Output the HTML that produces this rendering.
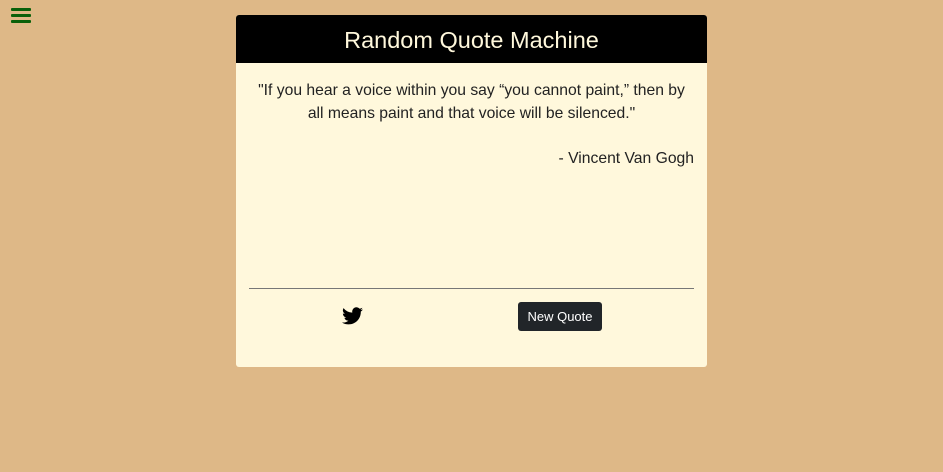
<!DOCTYPE html>
<html><head><style>
body{margin:0;width:943px;height:472px;background:#deb887;font-family:"Liberation Sans",sans-serif;position:relative;overflow:hidden}
.ham{position:absolute;left:11px;top:8px;width:20px}
.ham div{height:3px;background:#0a600a;margin-bottom:3px;border-radius:1px}
.card{position:absolute;left:236px;top:15px;width:471px;height:352px;background:#fff8dc;border-radius:3px;overflow:hidden}
.hd{height:48px;background:#000;color:#fff8dc;font-size:23.5px;text-align:center;line-height:50px}
.q{position:absolute;left:13px;width:445px;top:64px;text-align:center;font-size:15.7px;line-height:23px;color:#222}
.a{position:absolute;right:13px;top:135px;font-size:15.7px;color:#222}
.hr{position:absolute;left:13px;width:445px;top:273px;height:1px;background:#777}
.btn{position:absolute;left:282px;top:287px;width:84px;height:29px;background:#212529;color:#fff;border-radius:3px;font-size:13px;text-align:center;line-height:29px}
svg{position:absolute;left:106px;top:292px}
</style></head><body>
<div class="ham"><div></div><div></div><div></div></div>
<div class="card">
<div class="hd">Random Quote Machine</div>
<div class="q">"If you hear a voice within you say “you cannot paint,” then by all means paint and that voice will be silenced."</div>
<div class="a">- Vincent Van Gogh</div>
<div class="hr"></div>
<svg width="21" height="18" viewBox="0 0 24 20"><path fill="#000" d="M24 2.4a9.8 9.8 0 0 1-2.8.8A4.9 4.9 0 0 0 23.3.5a9.9 9.9 0 0 1-3.1 1.2A4.9 4.9 0 0 0 11.8 6.2 14 14 0 0 1 1.7 1a4.9 4.9 0 0 0 1.5 6.6A4.9 4.9 0 0 1 1 7v.1a4.9 4.9 0 0 0 3.9 4.8 4.9 4.9 0 0 1-2.2.1 4.9 4.9 0 0 0 4.6 3.4A9.9 9.9 0 0 1 0 17.4 14 14 0 0 0 7.5 19.6c9.1 0 14-7.5 14-14v-.6A10 10 0 0 0 24 2.4z"/></svg>
<div class="btn">New Quote</div>
</div>
</body></html>
